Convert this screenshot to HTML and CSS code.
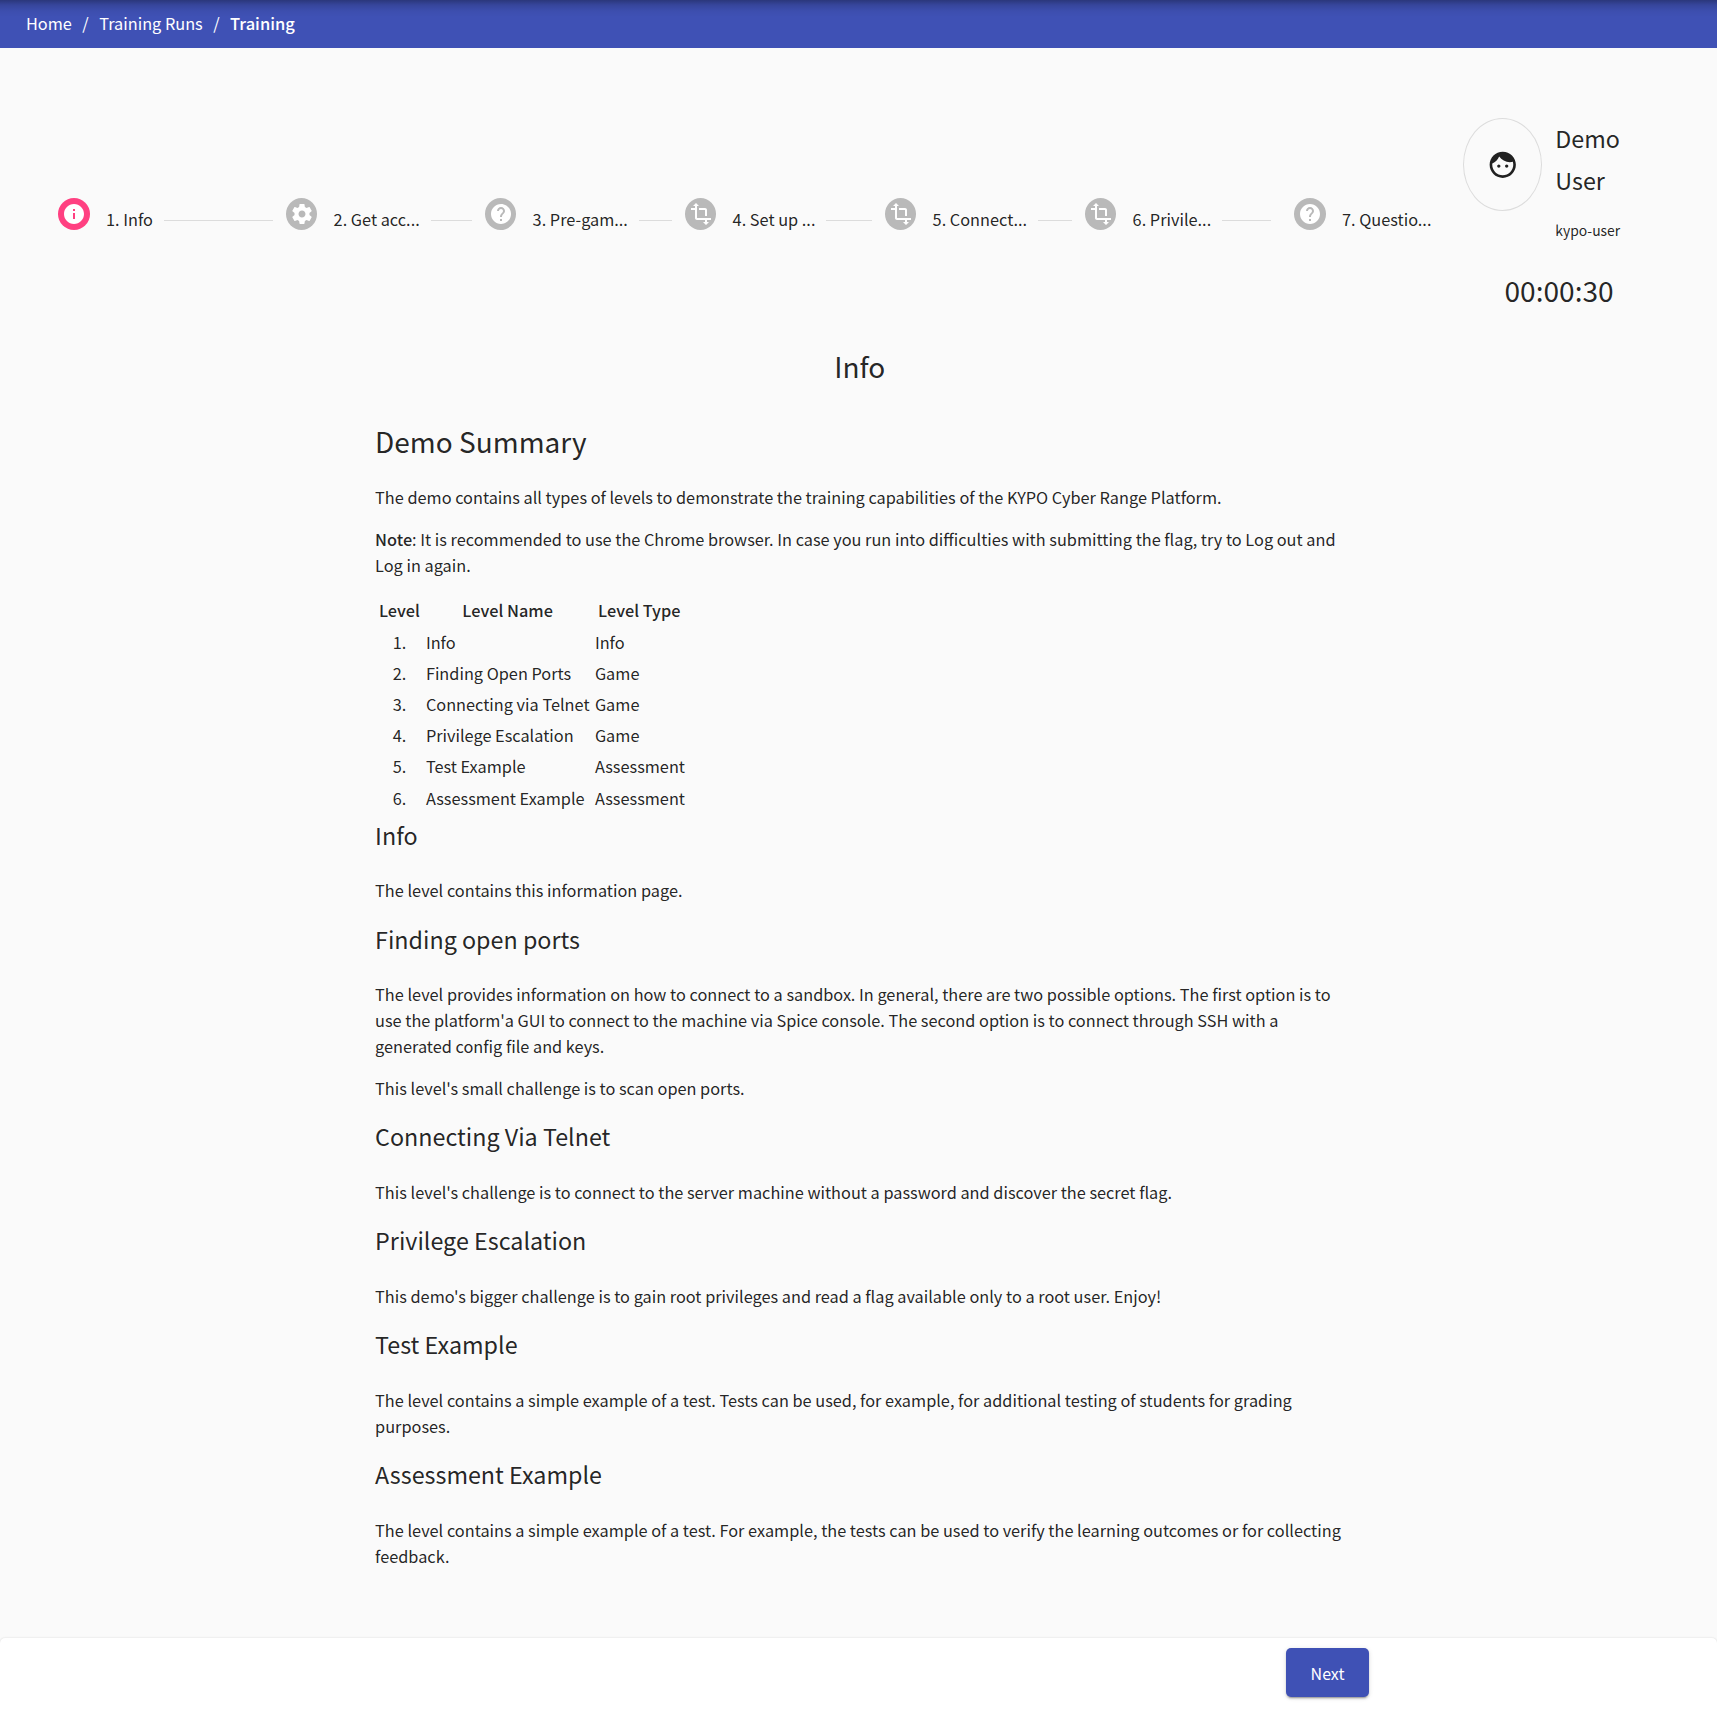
FILE: index.html
```html
<!DOCTYPE html>
<html lang="en">
<head>
<meta charset="utf-8">
<title>Training</title>
<link rel="stylesheet" href="styles.css">
</head>
<body>
<svg class="sprite" aria-hidden="true">
  <symbol id="info" viewBox="0 0 24 24"><path d="M12 2C6.48 2 2 6.48 2 12s4.48 10 10 10 10-4.48 10-10S17.52 2 12 2zm1 15h-2v-6h2v6zm0-8h-2V7h2v2z"/></symbol>
  <symbol id="help" viewBox="0 0 24 24"><path d="M12 2C6.48 2 2 6.48 2 12s4.48 10 10 10 10-4.48 10-10S17.52 2 12 2zm1 17h-2v-2h2v2zm2.07-7.75l-.9.92C13.45 12.9 13 13.5 13 15h-2v-.5c0-1.1.45-2.1 1.17-2.83l1.24-1.26c.37-.36.59-.86.59-1.41 0-1.1-.9-2-2-2s-2 .9-2 2H8c0-2.21 1.79-4 4-4s4 1.79 4 4c0 .88-.36 1.68-.93 2.25z"/></symbol>
  <symbol id="settings" viewBox="0 0 24 24"><path d="M19.43 12.98c.04-.32.07-.64.07-.98s-.03-.66-.07-.98l2.11-1.65c.19-.15.24-.42.12-.64l-2-3.46c-.12-.22-.39-.3-.61-.22l-2.49 1c-.52-.4-1.08-.73-1.69-.98l-.38-2.65C14.46 2.18 14.25 2 14 2h-4c-.25 0-.46.18-.49.42l-.38 2.65c-.61.25-1.17.59-1.69.98l-2.49-1c-.23-.09-.49 0-.61.22l-2 3.46c-.13.22-.07.49.12.64l2.11 1.65c-.04.32-.07.65-.07.98s.03.66.07.98l-2.11 1.65c-.19.15-.24.42-.12.64l2 3.46c.12.22.39.3.61.22l2.49-1c.52.4 1.08.73 1.69.98l.38 2.65c.03.24.24.42.49.42h4c.25 0 .46-.18.49-.42l.38-2.65c.61-.25 1.17-.59 1.69-.98l2.49 1c.23.09.49 0 .61-.22l2-3.46c.12-.22.07-.49-.12-.64l-2.11-1.65zM12 15.5c-1.93 0-3.5-1.57-3.5-3.5s1.57-3.5 3.5-3.5 3.5 1.57 3.5 3.5-1.57 3.5-3.5 3.5z"/></symbol>
  <symbol id="transform" viewBox="0 0 24 24"><path d="M22 18v-2H8V4h2L7 1 4 4h2v2H2v2h4v8c0 1.1.9 2 2 2h8v2h-2l3 3 3-3h-2v-2h4zM10 8h6v6h2V8c0-1.1-.9-2-2-2h-6v2z"/></symbol>
  <symbol id="face" viewBox="0 0 24 24"><path d="M9 11.75c-.69 0-1.25.56-1.25 1.25s.56 1.25 1.25 1.25 1.25-.56 1.25-1.25-.56-1.25-1.25-1.25zm6 0c-.69 0-1.25.56-1.25 1.25s.56 1.25 1.25 1.25 1.25-.56 1.25-1.25-.56-1.25-1.25-1.25zM12 2C6.48 2 2 6.48 2 12s4.48 10 10 10 10-4.48 10-10S17.52 2 12 2zm0 18c-4.41 0-8-3.59-8-8 0-.29.02-.58.05-.86 2.36-1.05 4.23-2.98 5.21-5.37C11.07 8.33 14.05 10 17.42 10c.78 0 1.53-.09 2.25-.26.21.71.33 1.47.33 2.26 0 4.41-3.59 8-8 8z"/></symbol>
</svg>
<div class="page">
  <nav class="breadcrumb">
    <a>Home</a><span class="sep">/</span><a>Training Runs</a><span class="sep">/</span><a class="current">Training</a>
  </nav>
  <header class="run-header">
    <ol class="stepper">
      <li class="step active"><span class="badge"><svg><use href="#info"/></svg></span><span class="label">1. Info</span><i class="line"></i></li>
      <li class="step"><span class="badge narrow"><svg><use href="#settings"/></svg></span><span class="label">2. Get acc...</span><i class="line"></i></li>
      <li class="step"><span class="badge narrow"><svg><use href="#help"/></svg></span><span class="label">3. Pre-gam...</span><i class="line"></i></li>
      <li class="step"><span class="badge narrow"><svg><use href="#transform"/></svg></span><span class="label">4. Set up ...</span><i class="line"></i></li>
      <li class="step"><span class="badge narrow"><svg><use href="#transform"/></svg></span><span class="label">5. Connect...</span><i class="line"></i></li>
      <li class="step before-last"><span class="badge narrow"><svg><use href="#transform"/></svg></span><span class="label">6. Privile...</span><i class="line"></i></li>
      <li class="step"><span class="badge"><svg><use href="#help"/></svg></span><span class="label">7. Questio...</span></li>
    </ol>
    <aside class="user">
      <div class="user-card">
        <span class="avatar"><svg><use href="#face"/></svg></span>
        <div class="names">
          <div class="full-name">Demo<br>User</div>
          <div class="login">kypo-user</div>
        </div>
      </div>
      <div class="timer">00:00:30</div>
    </aside>
  </header>
  <main class="level">
    <h1 class="level-title">Info</h1>
    <article class="content">
      <h1>Demo Summary</h1>
      <p class="lead">The demo contains all types of levels to demonstrate the training capabilities of the KYPO Cyber Range Platform.</p>
      <p><strong>Note</strong>: It is recommended to use the Chrome browser. In case you run into difficulties with submitting the flag, try to Log out and Log in again.</p>
      <table>
        <thead><tr><th>Level</th><th>Level Name</th><th>Level Type</th></tr></thead>
        <tbody>
          <tr><td>1.</td><td>Info</td><td>Info</td></tr>
          <tr><td>2.</td><td>Finding Open Ports</td><td>Game</td></tr>
          <tr><td>3.</td><td>Connecting via Telnet</td><td>Game</td></tr>
          <tr><td>4.</td><td>Privilege Escalation</td><td>Game</td></tr>
          <tr><td>5.</td><td>Test Example</td><td>Assessment</td></tr>
          <tr><td>6.</td><td>Assessment Example</td><td>Assessment</td></tr>
        </tbody>
      </table>
      <h2>Info</h2>
      <p>The level contains this information page.</p>
      <h2>Finding open ports</h2>
      <p>The level provides information on how to connect to a sandbox. In general, there are two possible options. The first option is to use the platform'a GUI to connect to the machine via Spice console. The second option is to connect through SSH with a generated config file and keys.</p>
      <p>This level's small challenge is to scan open ports.</p>
      <h2>Connecting Via Telnet</h2>
      <p>This level's challenge is to connect to the server machine without a password and discover the secret flag.</p>
      <h2>Privilege Escalation</h2>
      <p>This demo's bigger challenge is to gain root privileges and read a flag available only to a root user. Enjoy!</p>
      <h2>Test Example</h2>
      <p>The level contains a simple example of a test. Tests can be used, for example, for additional testing of students for grading purposes.</p>
      <h2>Assessment Example</h2>
      <p>The level contains a simple example of a test. For example, the tests can be used to verify the learning outcomes or for collecting feedback.</p>
    </article>
  </main>
  <footer class="actions"><button class="next">Next</button></footer>
</div>
</body>
</html>
```
FILE: styles.css
```css
* { box-sizing: border-box; }
html { background: #fff; }
body {
  margin: 0;
  height: 1710px;
  overflow: hidden;
  font: 400 16.31px/26px "Noto Sans CJK SC", sans-serif;
  color: rgba(0, 0, 0, .87);
}
.sprite { display: none; }
.page {
  width: 1717px;
  height: 1710px;
  background: #fafafa;
  display: flex;
  flex-direction: column;
  overflow: hidden;
}
.breadcrumb {
  flex: none;
  height: 48px;
  padding: 0 26px 2px;
  display: flex;
  align-items: center;
  background: #3f51b5 linear-gradient(rgba(0, 0, 0, .32), rgba(0, 0, 0, .14) 5px, rgba(0, 0, 0, .04) 11px, transparent 17px);
  color: #fff;
}
.breadcrumb .sep { margin: 0 10.5px; }
.breadcrumb .current { font-weight: 500; font-size: 16.5px; }

.run-header { flex: none; height: 292px; display: flex; }
.stepper {
  list-style: none;
  margin: 150px 0 0 58px;
  padding: 0;
  display: grid;
  grid-template-columns: 228px 199px 200px 200px 200px 209px 169px;
  height: 44px;
}
.step { display: flex; align-items: flex-start; }
.badge {
  flex: none;
  width: 32px;
  height: 32px;
  border-radius: 50%;
  background: #b9b9b9;
  display: flex;
  align-items: center;
  justify-content: center;
}
.badge.narrow { width: 31px; margin-right: .6px; }
.active .badge { background: #ff4081; }
.badge svg { width: 24px; height: 24px; flex: none; fill: #fff; }
.label { margin: 8px 0 0 16px; white-space: nowrap; }
.line { flex: 1; height: 1px; margin: 22px 13px 0 11px; background: #dcdcdc; }
.before-last .line { margin-right: 23px; }

.user { width: 200px; padding-top: 70px; }
.user-card { display: flex; }
.avatar {
  width: 79px;
  height: 93px;
  border: 1px solid #dcdcdc;
  border-radius: 50%;
  display: flex;
  align-items: center;
  justify-content: center;
}
.avatar svg { width: 31.5px; height: 31.5px; fill: rgba(0, 0, 0, .87); }
.names { margin: -1px 0 0 13.3px; }
.full-name { font-size: 23.3px; line-height: 42px; }
.login { margin-top: 17px; font-size: 13.9px; line-height: 24px; }
.timer { margin: 27px 0 0 41.5px; font-size: 28.1px; line-height: 42px; }

.level { flex: 1; }
h1, h2 { font-weight: 400; margin: 0; }
h1 { font-size: 28px; line-height: 42px; }
h2 { font-size: 23.3px; line-height: 40px; margin-bottom: 22px; }
.level-title { margin-top: 4.7px; padding-left: 2.4px; text-align: center; }
.content { width: 970px; margin: 33px 0 0 375.1px; }
.content h1 { margin-bottom: 22.5px; }
p { margin: 0 0 16px; }
.lead { margin-bottom: 15.5px; }
table ~ p + p, table ~ p + p ~ p { margin-bottom: 15px; }
table ~ p + p ~ h2 { margin-bottom: 23px; }
strong, th { font-weight: 500; }
table { border-collapse: collapse; table-layout: fixed; width: 312px; margin: 16.4px 0 1.6px; }
th, td { height: 31.2px; padding: 0; text-align: left; white-space: nowrap; }
th { height: 32px; text-align: center; }
th:first-child, td:first-child { width: 50.8px; padding-right: 2px; text-align: center; }
th:nth-child(2) { width: 169px; padding-right: 5.5px; }
th:nth-child(3) { padding-right: 3.5px; }

.actions {
  flex: none;
  height: 72px;
  padding: 10px 348px 0 0;
  display: flex;
  justify-content: flex-end;
  align-items: flex-start;
  background: #fff;
  border-radius: 5px 5px 0 0;
  box-shadow: 0 0 2px rgba(0, 0, 0, .16);
}
.next {
  width: 83px;
  height: 49px;
  padding: 0;
  border: 0;
  border-radius: 5px;
  background: #3f51b5;
  color: #fff;
  font: inherit;
  font-size: 16px;
  box-shadow: 0 3px 1px -2px rgba(0, 0, 0, .2), 0 2px 2px rgba(0, 0, 0, .14), 0 1px 5px rgba(0, 0, 0, .12);
}
```
